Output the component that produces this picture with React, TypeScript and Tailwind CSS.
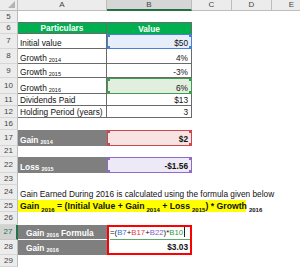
import React, { ReactNode } from "react";

function Sub({ children, big }: { children: ReactNode; big?: boolean }) {
  return (
    <span className={big ? "text-[6px] relative top-[1.5px] ml-[2px]" : "text-[5.5px] relative top-[1.5px] ml-[2px]"}>
      {children}
    </span>
  );
}

function Handle({ pos, color }: { pos: string; color: string }) {
  return <div className={`absolute w-[3px] h-[3px] ${pos} ${color}`} />;
}

function Row({
  n,
  h,
  sel,
  children,
}: {
  n: string;
  h: string;
  sel?: boolean;
  children?: ReactNode;
}) {
  return (
    <div className={`flex ${h} shrink-0`}>
      <div
        className={
          sel
            ? "w-[18px] shrink-0 flex items-center justify-center bg-[#d2d2d2] text-[#217346] border-r-2 border-r-[#217346] border-b border-b-[#c6c6c6] text-[8px]"
            : "w-[18px] shrink-0 flex items-center justify-center bg-[#ececec] text-[#444] border-r border-r-[#bdbdbd] border-b border-b-[#d6d6d6] text-[8px]"
        }
      >
        {n}
      </div>
      {children}
    </div>
  );
}

const tA =
  "w-[89px] shrink-0 border-r border-b border-[#6a6a6a] flex items-end pb-[1px] pl-[2px] text-[#111] whitespace-nowrap";
const tB =
  "w-[85px] shrink-0 border-r border-b border-[#6a6a6a] flex items-end justify-end pb-[1px] pr-[3px] text-[#111] whitespace-nowrap";

export default function App() {
  return (
    <div className="w-[300px] h-[267px] overflow-hidden bg-white flex flex-col font-['Liberation_Sans',Arial,sans-serif] text-[8.3px] leading-none">
      {/* column header */}
      <div className="flex h-[11px] shrink-0 text-[8px] text-[#444]">
        <div className="w-[18px] shrink-0 bg-[#ececec] border-r border-b border-[#bdbdbd] relative">
          <svg className="absolute right-[2px] bottom-[2px]" width="7" height="7" viewBox="0 0 7 7">
            <polygon points="7,0 7,7 0,7" fill="#b4b4b4" />
          </svg>
        </div>
        <div className="w-[89px] shrink-0 bg-[#ececec] border-r border-b border-[#bdbdbd] flex items-center justify-center">A</div>
        <div className="w-[85px] shrink-0 bg-[#d6d6d6] border-r border-r-[#bdbdbd] border-b-2 border-b-[#217346] flex items-center justify-center">B</div>
        <div className="w-[40px] shrink-0 bg-[#ececec] border-r border-b border-[#bdbdbd] flex items-center justify-center">C</div>
        <div className="w-[40px] shrink-0 bg-[#ececec] border-r border-b border-[#bdbdbd] flex items-center justify-center">D</div>
        <div className="w-[40px] shrink-0 bg-[#ececec] border-r border-b border-[#bdbdbd] flex items-center justify-center">E</div>
      </div>

      <Row n="5" h="h-[12px]">
        <div className="w-[174px] border-b border-[#6a6a6a]" />
      </Row>
      <Row n="6" h="h-[11px]">
        <div className="w-[89px] shrink-0 bg-[#00b050] border-r border-b border-[#6a6a6a] flex items-end justify-center pb-[1px] text-white font-bold">
          Particulars
        </div>
        <div className="w-[85px] shrink-0 bg-[#00b050] border-r border-[#6a6a6a] flex items-end justify-center pb-[1px] text-white font-bold">
          Value
        </div>
      </Row>
      <Row n="7" h="h-[15px]">
        <div className={tA}>Initial value</div>
        <div className="w-[85px] shrink-0 relative bg-[#e6eef9] border border-[#4a7fd4] flex items-end justify-end pb-[1px] pr-[3px] text-[#111]">
          $50
          <Handle pos="-left-[1px] -top-[1px]" color="bg-[#4a7fd4]" />
          <Handle pos="-right-[1px] -top-[1px]" color="bg-[#4a7fd4]" />
          <Handle pos="-left-[1px] -bottom-[1px]" color="bg-[#4a7fd4]" />
          <Handle pos="-right-[1px] -bottom-[1px]" color="bg-[#4a7fd4]" />
        </div>
      </Row>
      <Row n="8" h="h-[15px]">
        <div className={tA}>
          Growth<Sub>2014</Sub>
        </div>
        <div className={tB}>4%</div>
      </Row>
      <Row n="9" h="h-[14px]">
        <div className={tA}>
          Growth<Sub>2015</Sub>
        </div>
        <div className={tB}>-3%</div>
      </Row>
      <Row n="10" h="h-[16px]">
        <div className={tA}>
          Growth<Sub>2016</Sub>
        </div>
        <div className="w-[85px] shrink-0 relative bg-[#e2efdf] border border-[#3f9b4f] flex items-end justify-end pb-[1px] pr-[3px] text-[#111]">
          6%
          <Handle pos="-left-[1px] -top-[1px]" color="bg-[#3f9b4f]" />
          <Handle pos="-right-[1px] -top-[1px]" color="bg-[#3f9b4f]" />
          <Handle pos="-left-[1px] -bottom-[1px]" color="bg-[#3f9b4f]" />
          <Handle pos="-right-[1px] -bottom-[1px]" color="bg-[#3f9b4f]" />
        </div>
      </Row>
      <Row n="11" h="h-[12px]">
        <div className={tA}>Dividends Paid</div>
        <div className={tB}>$13</div>
      </Row>
      <Row n="12" h="h-[12px]">
        <div className={tA}>Holding Period (years)</div>
        <div className={tB}>3</div>
      </Row>
      <Row n="16" h="h-[12px]" />
      <Row n="17" h="h-[16px]">
        <div className="w-[89px] shrink-0 bg-[#7f7f7f] flex items-end pb-[2px] pl-[2px] text-white font-bold">
          Gain<Sub>2014</Sub>
        </div>
        <div className="w-[85px] shrink-0 relative bg-[#f8e3e3] border border-[#d1454f] flex items-end justify-end pb-[2px] pr-[3px] text-[#111] font-bold">
          $2
          <Handle pos="-left-[1px] -top-[1px]" color="bg-[#d1454f]" />
          <Handle pos="-right-[1px] -top-[1px]" color="bg-[#d1454f]" />
          <Handle pos="-left-[1px] -bottom-[1px]" color="bg-[#d1454f]" />
          <Handle pos="-right-[1px] -bottom-[1px]" color="bg-[#d1454f]" />
        </div>
      </Row>
      <Row n="21" h="h-[11px]" />
      <Row n="22" h="h-[16px]">
        <div className="w-[89px] shrink-0 bg-[#7f7f7f] flex items-end pb-[2px] pl-[2px] text-white font-bold">
          Loss<Sub>2015</Sub>
        </div>
        <div className="w-[85px] shrink-0 relative bg-[#eee9f7] border border-[#8e6bc8] flex items-end justify-end pb-[2px] pr-[3px] text-[#111] font-bold">
          -$1.56
          <Handle pos="-left-[1px] -top-[1px]" color="bg-[#8e6bc8]" />
          <Handle pos="-right-[1px] -top-[1px]" color="bg-[#8e6bc8]" />
          <Handle pos="-left-[1px] -bottom-[1px]" color="bg-[#8e6bc8]" />
          <Handle pos="-right-[1px] -bottom-[1px]" color="bg-[#8e6bc8]" />
        </div>
      </Row>
      <Row n="23" h="h-[12px]" />
      <Row n="24" h="h-[15px]">
        <div className="flex items-end pb-[2px] pl-[2px] text-[#111] whitespace-nowrap">
          Gain Earned During 2016 is calculated using the formula given below
        </div>
      </Row>
      <Row n="25" h="h-[12px]">
        <div className="w-[228px] shrink-0 bg-[#ffff00] flex items-end pb-[1px] pl-[2px] text-[#111] text-[8.7px] font-bold whitespace-nowrap">
          Gain<Sub big>2016</Sub>&nbsp;= (Initial Value + Gain<Sub big>2014</Sub>&nbsp;+ Loss<Sub big>2015</Sub>) * Growth<Sub big>2016</Sub>
        </div>
      </Row>
      <Row n="26" h="h-[13px]" />
      <Row n="27" h="h-[15px]" sel>
        <div className="w-[89px] shrink-0 bg-[#7f7f7f] border-b border-white flex items-end pb-[2px] pl-[8px] text-white font-bold whitespace-nowrap">
          Gain<Sub>2016</Sub>&nbsp;Formula
        </div>
        <div className="w-[85px] shrink-0 border-2 border-b-0 border-[#ff0000] flex items-end pl-[1px] text-[#111] text-[7.8px] whitespace-nowrap">
          <div className="flex items-end h-full w-full border-b border-[#5fa86a] pb-[2px]">
            =(<span className="text-[#3b6fd0]">B7</span>+<span className="text-[#e03c4c]">B17</span>+
            <span className="text-[#8a5cc8]">B22</span>)*<span className="text-[#2e9a48]">B10</span>
            <span className="inline-block w-[1px] h-[10px] bg-[#222] ml-[1px]" />
          </div>
        </div>
      </Row>
      <Row n="28" h="h-[15px]">
        <div className="w-[89px] shrink-0 bg-[#7f7f7f] flex items-end pb-[3px] pl-[8px] text-white font-bold whitespace-nowrap">
          Gain<Sub>2016</Sub>
        </div>
        <div className="w-[85px] shrink-0 border-2 border-t-0 border-[#ff0000] flex items-end justify-end pb-[2px] pr-[2px] text-[#111] font-bold">
          $3.03
        </div>
      </Row>
      <Row n="29" h="h-[12px]" />
    </div>
  );
}
